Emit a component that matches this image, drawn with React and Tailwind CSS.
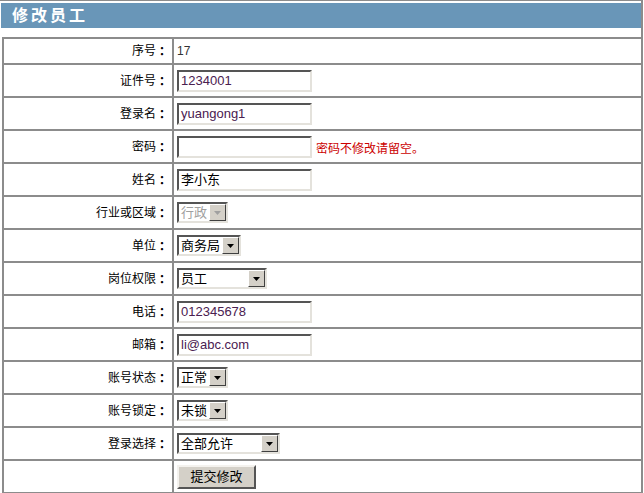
import React from 'react';

const cjk = { fontFamily: '"Liberation Sans", "Noto Sans CJK SC", sans-serif' };

const TextBox = ({ value = '', latin }) => (
  <div
    className={`w-[135px] h-[22px] bg-white border-2 border-t-[#555] border-l-[#555] border-b-[#e4e2dc] border-r-[#e4e2dc] px-[2px] flex items-center text-[13px] leading-none ${
      latin ? 'text-[#4a2050]' : 'text-black'
    }`}
  >
    {value}
  </div>
);

const Arrow = ({ disabled }) => (
  <div className="w-[17px] h-[17px] bg-[#d4d0c8] border border-t-white border-l-white border-b-[#404040] border-r-[#404040] flex items-center justify-center">
    <svg width="7" height="4" viewBox="0 0 7 4">
      <path d="M0 0h7L3.5 4z" fill={disabled ? '#a0a0a0' : '#000'} />
    </svg>
  </div>
);

const SelectBox = ({ value, width, disabled }) => (
  <div
    className="h-[21px] bg-white border-2 border-t-[#555] border-l-[#555] border-b-[#e4e2dc] border-r-[#e4e2dc] flex items-center justify-between pl-[2px]"
    style={{ width }}
  >
    <span className={`text-[13px] leading-none ${disabled ? 'text-[#a0a0a0]' : 'text-black'}`}>{value}</span>
    <Arrow disabled={disabled} />
  </div>
);

const rows = [
  { label: '序号', short: true, field: <span className="text-[12px] text-[#333]">17</span> },
  { label: '证件号', field: <TextBox value="1234001" latin /> },
  { label: '登录名', field: <TextBox value="yuangong1" latin /> },
  {
    label: '密码',
    field: (
      <div className="flex items-center gap-[4px]">
        <TextBox />
        <span className="text-[12px] text-[#cc0000] mt-[4px]">密码不修改请留空。</span>
      </div>
    ),
  },
  { label: '姓名', field: <TextBox value="李小东" /> },
  { label: '行业或区域', field: <SelectBox value="行政" width={51} disabled /> },
  { label: '单位', field: <SelectBox value="商务局" width={64} /> },
  { label: '岗位权限', field: <SelectBox value="员工" width={90} /> },
  { label: '电话', field: <TextBox value="012345678" latin /> },
  { label: '邮箱', field: <TextBox value="li@abc.com" latin /> },
  { label: '账号状态', field: <SelectBox value="正常" width={51} /> },
  { label: '账号锁定', field: <SelectBox value="未锁" width={51} /> },
  { label: '登录选择', field: <SelectBox value="全部允许" width={103} /> },
  {
    label: '',
    field: (
      <button className="w-[79px] h-[24px] bg-[#d4d0c8] border-2 border-t-[#f4f2ee] border-l-[#f4f2ee] border-b-[#555] border-r-[#555] text-[13px] text-black leading-none">
        提交修改
      </button>
    ),
  },
];

export default function App() {
  return (
    <div className="w-[644px] h-[493px] bg-white overflow-hidden" style={cjk}>
      <div className="w-[643px] border-t border-r-2 border-[#8c8c8c] pt-[2px] pl-[1px]">
        <div className="h-[25px] bg-[#6996b8] flex items-center pl-[11px]">
          <span className="text-white font-bold text-[16px] tracking-[3px]">修改员工</span>
        </div>
        <div className="h-[9px]" />
        <div className="ml-[1px] border-t-2 border-l-2 border-[#8c8c8c]">
          {rows.map((r, i) => (
            <div
              key={i}
              className={`flex border-b-2 border-[#8c8c8c] ${r.short ? 'h-[26px]' : 'h-[33px]'}`}
            >
              <div className="w-[170px] shrink-0 border-r-2 border-[#8c8c8c] flex items-center justify-end pr-[4px] text-[12px] text-black">
                {r.label && (
                  <>
                    {r.label}
                    <span
                      className="font-bold inline-block w-[12px] text-center"
                      style={{ fontFamily: '"Noto Sans CJK TC", sans-serif' }}
                    >
                      ：
                    </span>
                  </>
                )}
              </div>
              <div className="flex-1 flex items-center pl-[3px]">{r.field}</div>
            </div>
          ))}
        </div>
      </div>
    </div>
  );
}
